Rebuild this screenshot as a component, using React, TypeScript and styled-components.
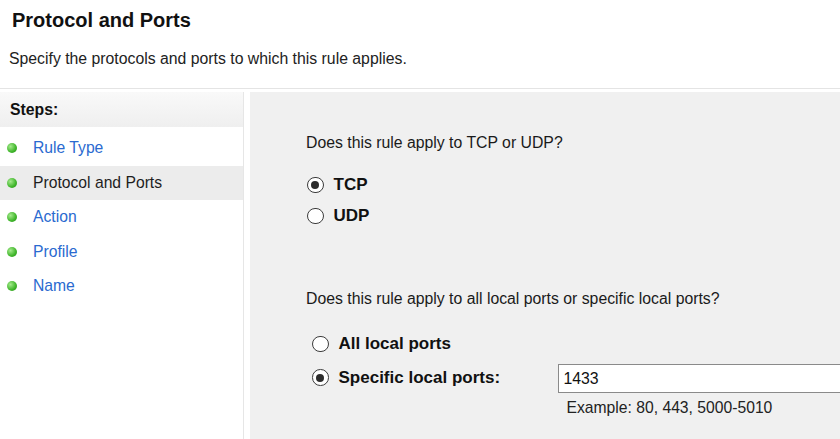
import styled, { createGlobalStyle } from "styled-components";

const GlobalStyle = createGlobalStyle`
  html, body {
    margin: 0;
    padding: 0;
    background: #ffffff;
  }
  body {
    font-family: "Liberation Sans", Arial, sans-serif;
    color: #1a1a1a;
  }
`;

const Page = styled.div`
  width: 840px;
  height: 439px;
  overflow: hidden;
  display: flex;
  flex-direction: column;
  background: #ffffff;
`;

const Header = styled.div`
  height: 89px;
  flex-shrink: 0;
  box-sizing: border-box;
  padding: 8px 0 0 10px;
  border-bottom: 1px solid #e4e4e4;
`;

const Title = styled.h1`
  margin: 0 0 0 2px;
  font-size: 20px;
  font-weight: bold;
  line-height: 24px;
  color: #111111;
`;

const Subtitle = styled.p`
  margin: 17px 0 0 -1px;
  font-size: 15.8px;
  line-height: 20px;
  color: #222222;
`;

const Body = styled.div`
  flex: 1;
  display: flex;
  padding-top: 3px;
`;

const Sidebar = styled.div`
  width: 243px;
  flex-shrink: 0;
  border-right: 1px solid #e6e6e6;
  margin-right: 6px;
  background: #ffffff;
`;

const StepsHeader = styled.div`
  height: 35px;
  display: flex;
  align-items: center;
  padding-left: 10px;
  margin-bottom: 4px;
  font-size: 15.8px;
  font-weight: bold;
  color: #111111;
  background: linear-gradient(#f9f9f9, #efefef);
`;

const StepRow = styled.div<{ $active?: boolean }>`
  height: 34.5px;
  display: flex;
  align-items: center;
  padding-left: 7px;
  gap: 16px;
  font-size: 15.7px;
  color: ${(p) => (p.$active ? "#1e1e1e" : "#2a6ad0")};
  background: ${(p) => (p.$active ? "#ececec" : "transparent")};
`;

const Dot = styled.span`
  width: 10px;
  height: 10px;
  border-radius: 50%;
  background: radial-gradient(circle at 35% 35%, #a4ea8c, #3fb52a 60%, #2a8c1b);
  flex-shrink: 0;
`;

const Content = styled.div`
  flex: 1;
  background: #f0f0f0;
  padding: 41px 0 0 56px;
  font-size: 15.8px;
  color: #1a1a1a;
`;

const Question = styled.div<{ $top?: number }>`
  line-height: 20px;
  margin-top: ${(p) => p.$top ?? 0}px;
`;

const Options = styled.div<{ $indent?: number; $gap: number; $top: number }>`
  display: flex;
  flex-direction: column;
  gap: ${(p) => p.$gap}px;
  margin-top: ${(p) => p.$top}px;
  padding-left: ${(p) => p.$indent ?? 0}px;
`;

const OptionRow = styled.div`
  display: flex;
  align-items: center;
  height: 20px;
`;

const Radio = styled.span<{ $checked?: boolean }>`
  width: 14.5px;
  height: 14.5px;
  border: 1.5px solid #3c3c3c;
  border-radius: 50%;
  background: #ffffff;
  display: flex;
  align-items: center;
  justify-content: center;
  flex-shrink: 0;
  &::after {
    content: "";
    display: ${(p) => (p.$checked ? "block" : "none")};
    width: 8px;
    height: 8px;
    border-radius: 50%;
    background: #2c2c2c;
  }
`;

const OptionLabel = styled.span<{ $width?: number }>`
  font-weight: bold;
  font-size: 17px;
  color: #111111;
  margin-left: 10px;
  width: ${(p) => (p.$width ? `${p.$width}px` : "auto")};
`;

const PortBlock = styled.div`
  display: flex;
  flex-direction: column;
`;

const PortInput = styled.div`
  width: 300px;
  height: 29px;
  box-sizing: border-box;
  border: 1px solid #8a8a8a;
  border-right: none;
  background: #ffffff;
  display: flex;
  align-items: center;
  padding-left: 5px;
  font-size: 15.8px;
  color: #111111;
`;

const Hint = styled.div`
  margin: 5px 0 0 9px;
  font-size: 15.7px;
  line-height: 19px;
  color: #222222;
`;

const PortRow = styled.div`
  display: flex;
  align-items: flex-start;
`;

const PortRadioWrap = styled.div`
  display: flex;
  align-items: center;
  height: 27px;
`;

const steps = ["Rule Type", "Protocol and Ports", "Action", "Profile", "Name"];

export default function App() {
  return (
    <>
      <GlobalStyle />
      <Page>
        <Header>
          <Title>Protocol and Ports</Title>
          <Subtitle>Specify the protocols and ports to which this rule applies.</Subtitle>
        </Header>
        <Body>
          <Sidebar>
            <StepsHeader>Steps:</StepsHeader>
            {steps.map((s) => (
              <StepRow key={s} $active={s === "Protocol and Ports"}>
                <Dot />
                {s}
              </StepRow>
            ))}
          </Sidebar>
          <Content>
            <Question>Does this rule apply to TCP or UDP?</Question>
            <Options $gap={11} $top={22} $indent={1}>
              <OptionRow>
                <Radio $checked />
                <OptionLabel>TCP</OptionLabel>
              </OptionRow>
              <OptionRow>
                <Radio />
                <OptionLabel>UDP</OptionLabel>
              </OptionRow>
            </Options>
            <Question $top={63}>
              Does this rule apply to all local ports or specific local ports?
            </Question>
            <Options $gap={10} $top={25} $indent={6}>
              <OptionRow>
                <Radio />
                <OptionLabel>All local ports</OptionLabel>
              </OptionRow>
              <PortRow>
                <PortRadioWrap>
                  <Radio $checked />
                  <OptionLabel $width={219}>Specific local ports:</OptionLabel>
                </PortRadioWrap>
                <PortBlock>
                  <PortInput>1433</PortInput>
                  <Hint>Example: 80, 443, 5000-5010</Hint>
                </PortBlock>
              </PortRow>
            </Options>
          </Content>
        </Body>
      </Page>
    </>
  );
}
